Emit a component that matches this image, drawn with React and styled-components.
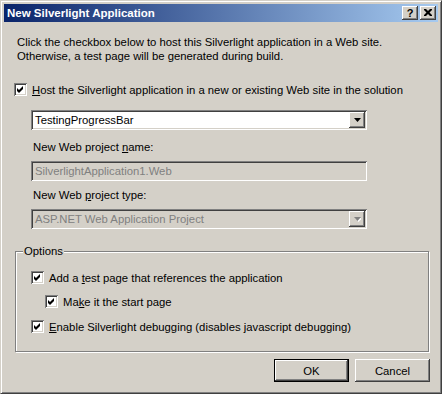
import React from "react";
import styled, { createGlobalStyle, css } from "styled-components";

const FACE = "#D4D0C8";

const GlobalStyle = createGlobalStyle`
  html, body { margin: 0; padding: 0; background: ${FACE}; }
  body { font-family: "Liberation Sans", Arial, sans-serif; }
  * { box-sizing: border-box; }
`;

const raised = css`
  background: ${FACE};
  box-shadow: inset -1px -1px #404040, inset 1px 1px #ffffff,
    inset -2px -2px #808080, inset 2px 2px ${FACE};
`;

const sunken = css`
  box-shadow: inset 1px 1px #808080, inset -1px -1px #ffffff,
    inset 2px 2px #404040, inset -2px -2px ${FACE};
`;

const Window = styled.div`
  width: 442px;
  height: 394px;
  background: ${FACE};
  border: 1px solid;
  border-color: ${FACE} #404040 #404040 ${FACE};
  box-shadow: inset 1px 1px #ffffff, inset -1px -1px #808080;
  padding: 3px;
  display: flex;
  flex-direction: column;
  font-size: 11.3px;
  color: #000;
`;

const TitleBar = styled.div`
  height: 18px;
  background: linear-gradient(to right, #0a246a, #a6caf0);
  display: flex;
  align-items: center;
  padding: 0 2px 0 3px;
`;

const TitleText = styled.div`
  flex: 1;
  color: #fff;
  font-weight: bold;
  font-size: 11.5px;
  white-space: nowrap;
`;

const CaptionButton = styled.div`
  ${raised};
  width: 16px;
  height: 14px;
  display: flex;
  align-items: center;
  justify-content: center;
  font-weight: bold;
  font-size: 11px;
  margin-left: ${(p) => (p.$gap ? "2px" : "0")};
  padding-bottom: 1px;
`;

const Client = styled.div`
  flex: 1;
  display: flex;
  flex-direction: column;
  padding: 13px 7px 0 10px;
`;

const Intro = styled.p`
  margin: 0 0 0 3px;
  line-height: 14px;
`;

const CheckRow = styled.label`
  display: flex;
  align-items: center;
  height: 13px;
  margin-top: ${(p) => p.$mt || 0}px;
  margin-left: ${(p) => p.$indent || 0}px;
  gap: 5px;
  white-space: nowrap;
`;

const Box = styled.span`
  width: 13px;
  height: 13px;
  flex: none;
  background: #fff;
  ${sunken};
  display: block;
`;

const Check = () => (
  <Box>
    <svg width="13" height="13" viewBox="0 0 13 13">
      <polygon points="3,5 5,7 9,3 9,6 5,10 3,8" fill="#000" />
    </svg>
  </Box>
);

const FieldBlock = styled.div`
  margin-left: 17px;
  display: flex;
  flex-direction: column;
`;

const Combo = styled.div`
  width: 336px;
  height: 20px;
  margin-top: ${(p) => p.$mt || 0}px;
  background: ${(p) => (p.$disabled ? FACE : "#fff")};
  color: ${(p) => (p.$disabled ? "#808080" : "#000")};
  ${sunken};
  display: flex;
  align-items: center;
  padding: 2px 2px 2px 4px;
`;

const ComboText = styled.span`
  flex: 1;
  white-space: nowrap;
`;

const DropButton = styled.div`
  ${raised};
  width: 16px;
  height: 16px;
  display: flex;
  align-items: center;
  justify-content: center;
`;

const FieldLabel = styled.div`
  margin: ${(p) => p.$mt || 0}px 0 0 2px;
  line-height: 14px;
  height: 14px;
`;

const Group = styled.div`
  position: relative;
  margin: 22px 0 0 1px;
  width: 414px;
  height: 101px;
  border: 1px solid #808080;
  box-shadow: 1px 1px #ffffff, inset 1px 1px #ffffff;
  padding: 19px 0 0 15px;
  display: flex;
  flex-direction: column;
`;

const Legend = styled.span`
  position: absolute;
  left: 7px;
  top: -8px;
  padding: 0 1px;
  line-height: 14px;
  background: ${FACE};
`;

const ButtonRow = styled.div`
  display: flex;
  justify-content: flex-end;
  gap: 6px;
  margin-top: 7px;
  padding-right: 1px;
`;

const Button = styled.div`
  width: 75px;
  height: 23px;
  display: flex;
  align-items: center;
  justify-content: center;
  ${raised};
  ${(p) =>
    p.$default &&
    css`
      box-shadow: inset 0 0 0 1px #000, inset -2px -2px #404040,
        inset 2px 2px #ffffff, inset -3px -3px #808080;
    `}
`;

const Arrow = ({ disabled }) => (
  <svg width="7" height="5" viewBox="0 0 7 5">
    {disabled && <polygon points="1,1 8,1 4.5,5" fill="#fff" />}
    <polygon points="0,0 7,0 3.5,4" fill={disabled ? "#808080" : "#000"} />
  </svg>
);

export default function App() {
  return (
    <>
      <GlobalStyle />
      <Window>
        <TitleBar>
          <TitleText>New Silverlight Application</TitleText>
          <CaptionButton>?</CaptionButton>
          <CaptionButton $gap>
            <svg width="8" height="7" viewBox="0 0 8 7">
              <path
                d="M0,0h2l2,2l2,-2h2v1l-2.5,2.5l2.5,2.5v1h-2l-2,-2l-2,2h-2v-1l2.5,-2.5l-2.5,-2.5z"
                fill="#000"
              />
            </svg>
          </CaptionButton>
        </TitleBar>
        <Client>
          <Intro>
            Click the checkbox below to host this Silverlight application in a Web site.
            <br />
            Otherwise, a test page will be generated during build.
          </Intro>
          <CheckRow $mt={20}>
            <Check />
            <span>
              <u>H</u>ost the Silverlight application in a new or existing Web site in the solution
            </span>
          </CheckRow>
          <FieldBlock>
            <Combo $mt={14}>
              <ComboText>TestingProgressBar</ComboText>
              <DropButton>
                <Arrow />
              </DropButton>
            </Combo>
            <FieldLabel $mt={10}>
              New Web project <u>n</u>ame:
            </FieldLabel>
            <Combo $mt={7} $disabled>
              <ComboText>SilverlightApplication1.Web</ComboText>
            </Combo>
            <FieldLabel $mt={7}>
              New Web <u>p</u>roject type:
            </FieldLabel>
            <Combo $mt={7} $disabled>
              <ComboText>ASP.NET Web Application Project</ComboText>
              <DropButton>
                <Arrow disabled />
              </DropButton>
            </Combo>
          </FieldBlock>
          <Group>
            <Legend>Options</Legend>
            <CheckRow>
              <Check />
              <span>
                Add a <u>t</u>est page that references the application
              </span>
            </CheckRow>
            <CheckRow $mt={11} $indent={14}>
              <Check />
              <span>
                Ma<u>k</u>e it the start page
              </span>
            </CheckRow>
            <CheckRow $mt={12}>
              <Check />
              <span>
                <u>E</u>nable Silverlight debugging (disables javascript debugging)
              </span>
            </CheckRow>
          </Group>
          <ButtonRow>
            <Button $default>OK</Button>
            <Button>Cancel</Button>
          </ButtonRow>
        </Client>
      </Window>
    </>
  );
}
